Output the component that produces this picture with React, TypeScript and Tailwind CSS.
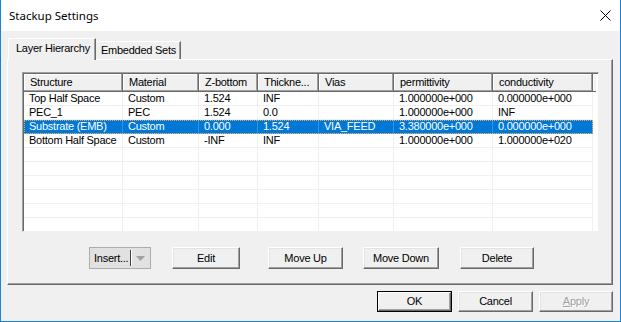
import React from 'react';

const cols = [
  { label: 'Structure', w: 'w-[99px]' },
  { label: 'Material', w: 'w-[76px]' },
  { label: 'Z-bottom', w: 'w-[59px]' },
  { label: 'Thickne...', w: 'w-[61px]' },
  { label: 'Vias', w: 'w-[75px]' },
  { label: 'permittivity', w: 'w-[99px]' },
  { label: 'conductivity', w: 'w-[100px]' },
];

const rows = [
  ['Top Half Space', 'Custom', '1.524', 'INF', '', '1.000000e+000', '0.000000e+000'],
  ['PEC_1', 'PEC', '1.524', '0.0', '', '1.000000e+000', 'INF'],
  ['Substrate (EMB)', 'Custom', '0.000', '1.524', 'VIA_FEED', '3.380000e+000', '0.000000e+000'],
  ['Bottom Half Space', 'Custom', '-INF', 'INF', '', '1.000000e+000', '1.000000e+020'],
  ['', '', '', '', '', '', ''],
  ['', '', '', '', '', '', ''],
  ['', '', '', '', '', '', ''],
  ['', '', '', '', '', '', ''],
  ['', '', '', '', '', '', ''],
  ['', '', '', '', '', '', ''],
];

const SELECTED = 2;

function Button({ children, className = '' }: { children: React.ReactNode; className?: string }) {
  return (
    <div
      className={`h-[22px] flex items-center justify-center bg-[#f0f0f0] border-l border-t border-white border-r border-b border-r-[#696969] border-b-[#696969] shadow-[inset_-1px_-1px_0_#a0a0a0,inset_1px_1px_0_#e3e3e3] text-black ${className}`}
    >
      {children}
    </div>
  );
}

export default function App() {
  return (
    <div
      className="w-[621px] h-[322px] bg-[#f0f0f0] border-x border-b border-[#1883d7] flex flex-col overflow-hidden text-[11px] tracking-[-0.25px] text-black"
      style={{ fontFamily: '"Liberation Sans", Arial, sans-serif' }}
    >
      {/* Title bar */}
      <div className="h-[31px] bg-white flex items-center justify-between pl-[8px] pr-[9px] shrink-0">
        <span className="text-[11.5px] tracking-normal text-black" style={{ fontFamily: '"Noto Sans", sans-serif' }}>
          Stackup Settings
        </span>
        <svg width="11" height="11" viewBox="0 0 11 11" className="mb-[1px]">
          <path d="M0.5 0.5 L10.5 10.5 M10.5 0.5 L0.5 10.5" stroke="#000" strokeWidth="1" />
        </svg>
      </div>

      {/* Tabs */}
      <div className="ml-[6px] mt-[7px] h-[21px] flex items-end">
        <div className="relative z-10 -mb-px ml-[1px] w-[88px] h-[22px] pl-[7px] pb-[2px] flex items-center bg-[#f0f0f0] border-l border-t border-white border-r border-r-[#696969] shadow-[inset_-1px_0_0_#a0a0a0]">
          Layer Hierarchy
        </div>
        <div className="w-[85px] h-[18px] pl-[5px] flex items-center border-t border-white border-r border-r-[#696969] shadow-[inset_-1px_0_0_#a0a0a0]">
          Embedded Sets
        </div>
      </div>

      {/* Tab panel */}
      <div className="ml-[6px] w-[606px] h-[226px] border-l border-t border-white border-r border-b border-r-[#696969] border-b-[#696969] shadow-[inset_-1px_-1px_0_#a0a0a0] flex flex-col pl-[14px] pt-[12px]">
        {/* List */}
        <div className="w-[577px] h-[160px] bg-white border-l border-t border-[#a0a0a0] border-r border-b border-r-[#f0f0f0] border-b-[#f0f0f0] shadow-[inset_1px_1px_0_#696969] pl-px pt-px overflow-hidden">
          <div className="flex h-[18px]">
            {cols.map((c) => (
              <div
                key={c.label}
                className={`${c.w} shrink-0 h-[18px] pl-[6px] flex items-center bg-[#f0f0f0] border-r border-b border-[#696969] shadow-[inset_-1px_-1px_0_#a0a0a0,inset_1px_1px_0_#ffffff] whitespace-nowrap overflow-hidden`}
              >
                {c.label}
              </div>
            ))}
            <div className="w-[3px] shrink-0 h-[18px] bg-[#f0f0f0] border-b border-[#696969] shadow-[inset_1px_1px_0_#ffffff]" />
          </div>
          {rows.map((r, i) => {
            const sel = i === SELECTED;
            return (
              <div
                key={i}
                className={`flex h-[14px] w-[569px] ${
                  sel
                    ? 'bg-[#0078d7] text-white outline-1 outline-dotted outline-[#f4a54a] -outline-offset-1'
                    : ''
                }`}
              >
                {r.map((cell, j) => (
                  <div
                    key={j}
                    className={`${cols[j].w} shrink-0 h-[14px] pl-[5px] leading-[13px] border-r border-b whitespace-nowrap overflow-hidden ${
                      sel ? 'border-[#3393df]' : 'border-[#f0f0f0]'
                    }`}
                  >
                    {cell}
                  </div>
                ))}
              </div>
            );
          })}
        </div>

        {/* Action buttons */}
        <div className="mt-[15px] ml-[67px] flex items-center">
          <div className="w-[62px] h-[22px] flex items-center bg-[#e1e1e1] border border-[#adadad] pl-[4px]">
            <span>Insert...</span>
            <div className="ml-[2px] w-[2px] h-[16px] border-l border-[#404040] border-r border-r-white" />
            <svg width="9" height="5" viewBox="0 0 9 5" className="ml-[4px]">
              <path d="M0 0 H9 L4.5 5 Z" fill="#a0a0a0" />
            </svg>
          </div>
          <Button className="ml-[21px] w-[68px]">Edit</Button>
          <Button className="ml-[28px] w-[75px]">Move Up</Button>
          <Button className="ml-[20px] w-[76px]">Move Down</Button>
          <Button className="ml-[21px] w-[74px]">Delete</Button>
        </div>
      </div>

      {/* Dialog buttons */}
      <div className="mt-[6px] flex justify-end pr-[7px] gap-[6px]">
        <div className="w-[75px] h-[21px] border border-black">
          <div className="w-full h-full flex items-center justify-center bg-[#f0f0f0] border-l border-t border-white border-r border-b border-r-[#696969] border-b-[#696969] shadow-[inset_-1px_-1px_0_#a0a0a0]">
            OK
          </div>
        </div>
        <Button className="!h-[21px] w-[75px]">Cancel</Button>
        <Button className="!h-[21px] w-[74px]">
          <span className="text-[#a0a0a0] [text-shadow:1px_1px_0_#ffffff]">
            <span className="underline">A</span>pply
          </span>
        </Button>
      </div>
    </div>
  );
}
